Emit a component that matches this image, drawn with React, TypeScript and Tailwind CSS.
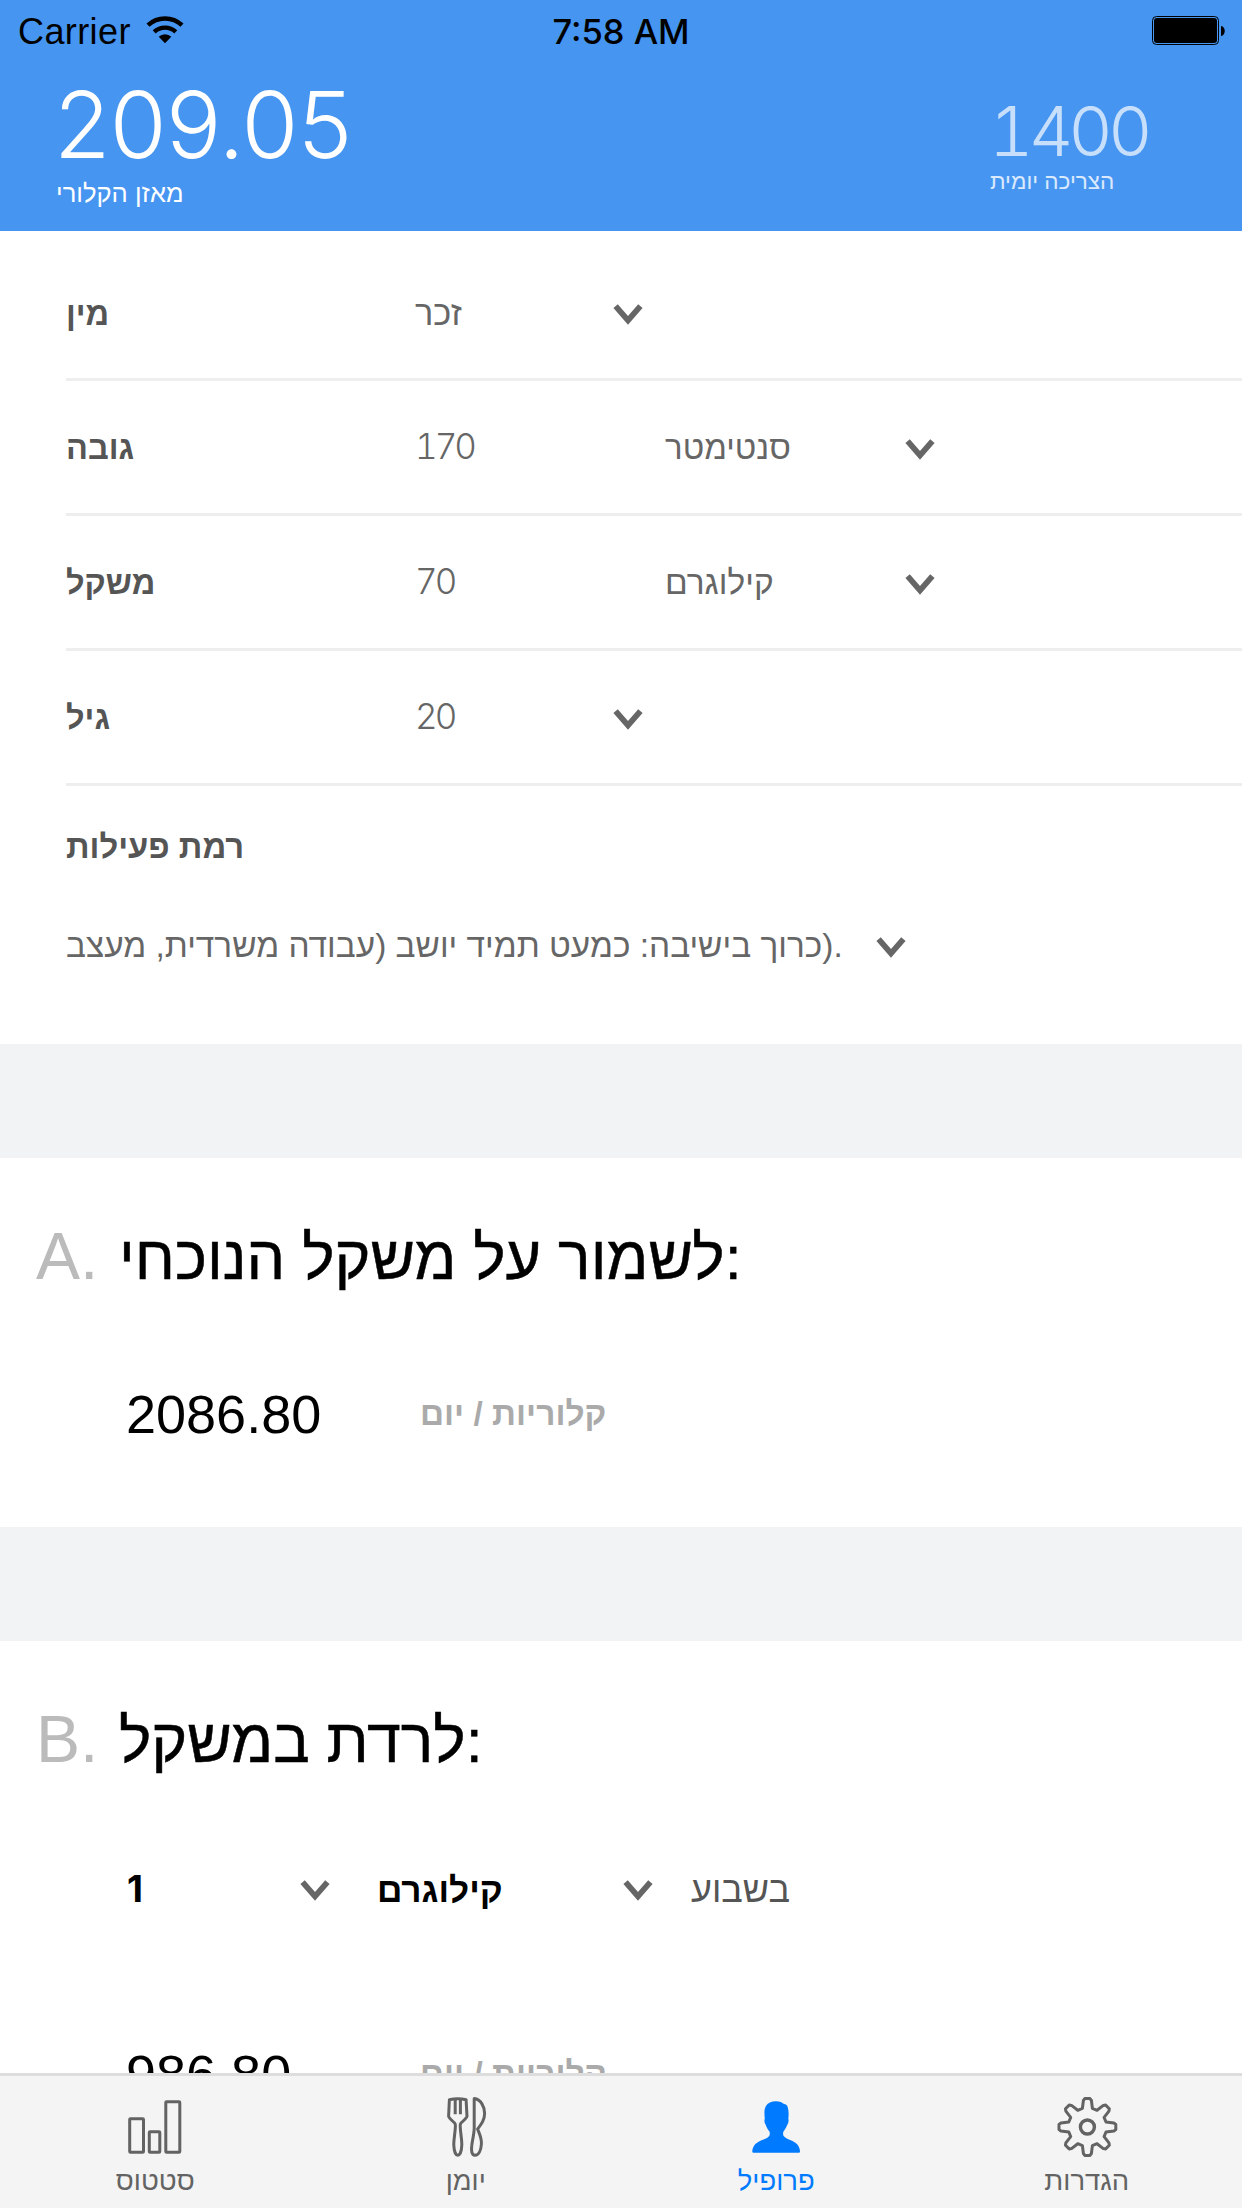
import React from 'react';

function Chevron({ className = '' }: { className?: string }) {
  return (
    <svg width="30" height="21" viewBox="0 0 30 21" className={'shrink-0 ' + className}>
      <path d="M2.6 2.2 L15 16.4 L27.4 2.2" fill="none" stroke="#666" strokeWidth="5.8" />
    </svg>
  );
}

function WifiIcon() {
  return (
    <svg width="38" height="28" viewBox="0 0 38 28">
      <g fill="none" stroke="#000" strokeWidth="4.4">
        <path d="M2 9.2 A24.8 24.8 0 0 1 36 9.2" />
        <path d="M8.2 15.9 A15.7 15.7 0 0 1 29.8 15.9" />
      </g>
      <path d="M12.7 20.7 A9 9 0 0 1 25.3 20.7 L19 27.2 Z" fill="#000" />
    </svg>
  );
}

function BatteryIcon() {
  return (
    <svg width="74" height="29" viewBox="0 0 74 29">
      <rect x="0.5" y="0.5" width="66" height="28" rx="4" fill="none" stroke="#000" />
      <rect x="2" y="2" width="63" height="25" rx="3" fill="#000" />
      <path d="M69 10 C74 10.5 74 19.5 69 20 Z" fill="#000" />
    </svg>
  );
}

function ChartIcon() {
  return (
    <svg width="64" height="64" viewBox="0 0 64 64" fill="none" stroke="#636363" strokeWidth="3">
      <rect x="6.7" y="23.8" width="13.8" height="33.4" rx="0.8" />
      <rect x="26.3" y="36.8" width="10.5" height="20.4" rx="0.8" />
      <rect x="42.8" y="6.8" width="14" height="50.4" rx="0.8" />
    </svg>
  );
}

function CutleryIcon() {
  return (
    <svg width="64" height="64" viewBox="0 0 64 64" fill="none" stroke="#636363" strokeWidth="3" strokeLinejoin="round">
      <path d="M15.4 4.8 Q23.8 2.6 32.1 4.8 L33 21.3 Q33 22.6 27 28 Q26 29 26.2 31 C26.4 38 28 45 27.8 50 C27.6 56 26 60.2 23.8 60.2 C21.6 60.2 20 56 19.8 50 C19.6 45 21.2 38 21.4 31 Q21.6 29 20.6 28 Q14.6 22.6 14.6 21.3 Z" />
      <path d="M21.2 4 V19.2 M26.4 4 V19.2" />
      <path d="M40.2 3.6 C47 4.4 50.6 12 50.6 18.5 C50.6 25 47.4 29 43.6 34 C45.4 39 47.8 43 47.4 49 C47 55.5 44.6 60.2 41 60.2 C37.4 60.2 37.2 55 37.7 51 C38.3 45 40.2 39 40.2 33 Z" />
    </svg>
  );
}

function PersonIcon() {
  return (
    <svg width="64" height="64" viewBox="0 0 64 64" fill="#007aff">
      <path d="M32 6.3 C36 6.3 38 7.3 39.5 8.8 C42 9 43.6 10.5 43.9 13 C44.8 16 44.8 20 44.3 23.6 C45 26 44.3 28.5 43.2 30 C42 33 40.8 34.6 39.3 36.8 C39 38.6 39 39.6 39.6 41 C41.6 43.6 44.5 44.2 48 45.8 C53 48.2 55.8 51.5 56 56.4 Q56 57.7 54.8 57.7 H9.6 Q8.3 57.7 8.3 56.4 C8.6 51.5 11.4 48.2 16.4 45.8 C20 44.2 23 43.6 25.2 41 C25.9 39.6 25.9 38.6 25.6 36.8 C24 34.6 22.8 33 21.8 30 C20.6 28.5 20 26 20.8 23.6 C20.2 18 20.2 14 21.8 11.2 C23.6 8 27.4 6.3 32 6.3 Z" />
    </svg>
  );
}

const gearTooth: [number, number][] = [
  [-5, -18.6],
  [-4, -26.5],
  [-2.6, -28.4],
  [2.6, -28.4],
  [4, -26.5],
  [5, -18.6],
];

const gearPoints = Array.from({ length: 8 }, (_, i) => {
  const a = (i * Math.PI) / 4;
  return gearTooth
    .map(([x, y]) => `${(32.4 + x * Math.cos(a) - y * Math.sin(a)).toFixed(2)},${(32 + x * Math.sin(a) + y * Math.cos(a)).toFixed(2)}`)
    .join(' ');
}).join(' ');

function GearIcon() {
  return (
    <svg width="64" height="64" viewBox="0 0 64 64" fill="none" stroke="#636363" strokeWidth="3" strokeLinejoin="round">
      <polygon points={gearPoints} />
      <circle cx="32.4" cy="32" r="7" strokeWidth="3.4" />
    </svg>
  );
}

const num = "font-['Inter'] font-[350] tabular-nums text-[35px] tracking-[-3px]";

function Row({ label, first, children }: { label: string; first?: boolean; children: React.ReactNode }) {
  return (
    <div
      className={
        'ml-[66px] flex items-baseline border-b-[3px] border-[#eee] leading-[40px] text-[#666] ' +
        (first ? 'h-[150px] pt-[62px]' : 'h-[135px] pt-[45px]')
      }
    >
      <div className="w-[349px] text-[32.5px] font-bold text-[#555]">{label}</div>
      {children}
    </div>
  );
}

function SectionTitle({ letter, text }: { letter: string; text: string }) {
  return (
    <div className="flex h-[226px] items-baseline pl-[36px] pt-[58px] leading-[80px]">
      <div className="w-[83px] text-[66px] text-[#bbb]">{letter}</div>
      <div className="text-[61px] text-black [-webkit-text-stroke:0.5px_black]">{text}</div>
    </div>
  );
}

function Calories({ value }: { value: string }) {
  return (
    <div className="flex items-start pl-[126px] leading-[60px]">
      <div className="w-[294px] text-[54px] leading-[61px] text-black">{value}</div>
      <div className="text-[33.4px] font-bold text-[#aaa]">קלוריות / יום</div>
    </div>
  );
}

function Tab({ icon, label, active }: { icon: React.ReactNode; label: string; active?: boolean }) {
  return (
    <div className={'flex flex-1 flex-col items-center pt-[19px] ' + (active ? 'text-[#007aff]' : 'text-[#636363]')}>
      {icon}
      <div className="mt-[7px] text-[27.4px] leading-[30px]">{label}</div>
    </div>
  );
}

export default function App() {
  return (
    <div className="flex h-[2208px] w-[1242px] flex-col overflow-hidden whitespace-nowrap bg-white font-['Liberation_Sans',sans-serif]">
      <header className="h-[231px] shrink-0 bg-[#4595f1]">
        <div className="grid h-[63px] grid-cols-3 leading-[63px] text-black">
          <div className="flex pl-[18px]">
            <span className="text-[36px] tracking-[0.4px]">Carrier</span>
            <div className="ml-[15px] pt-[16px]">
              <WifiIcon />
            </div>
          </div>
          <div className="text-center font-['Inter'] text-[34.5px] font-medium">7:58 AM</div>
          <div className="flex justify-end pr-[16px] pt-[16px]">
            <BatteryIcon />
          </div>
        </div>
        <div className="flex justify-between pl-[54px] text-white">
          <div className="pt-[12px]">
            <div className="font-['Inter'] text-[92px] font-light leading-[100px] tracking-[-0.6px]">209.05</div>
            <div className="ml-[2px] mt-[3px] text-[25.6px] leading-[30px]">מאזן הקלורי</div>
          </div>
          <div className="w-[252px] pt-[33px]">
            <div className="-ml-px font-['Inter'] text-[69px] font-light leading-[70px] tracking-[-5px] tabular-nums text-white/70">
              1400
            </div>
            <div className="mt-px text-[22.5px] leading-[30px] text-white/80">הצריכה יומית</div>
          </div>
        </div>
      </header>

      <main className="min-h-0 flex-1 overflow-hidden">
        <section className="h-[813px]">
          <Row label="מין" first>
            <div className="w-[198px] text-[34.4px]">זכר</div>
            <Chevron />
          </Row>
          <Row label="גובה">
            <div className={num + ' w-[250px]'}>170</div>
            <div className="w-[240px] text-[33px]">סנטימטר</div>
            <Chevron className="translate-y-px" />
          </Row>
          <Row label="משקל">
            <div className={num + ' w-[250px]'}>70</div>
            <div className="w-[240px] text-[33.5px]">קילוגרם</div>
            <Chevron className="translate-y-px" />
          </Row>
          <Row label="גיל">
            <div className={num + ' w-[198px]'}>20</div>
            <Chevron className="translate-y-px" />
          </Row>
          <div className="ml-[66px] flex flex-col pt-[41px] leading-[40px]">
            <div className="text-[32.8px] font-bold text-[#555]">רמת פעילות</div>
            <div className="mt-[59px] flex items-baseline text-[#666]">
              <div className="w-[810px] text-[33.4px]">
                <bdi>כרוך בישיבה: כמעט תמיד יושב (עבודה משרדית, מעצב</bdi>).
              </div>
              <Chevron className="translate-y-px" />
            </div>
          </div>
        </section>

        <div className="h-[114px] bg-[#f2f3f5]" />

        <section className="h-[369px]">
          <SectionTitle letter="A." text="לשמור על משקל הנוכחי:" />
          <Calories value="2086.80" />
        </section>

        <div className="h-[114px] bg-[#f2f3f5]" />

        <section>
          <SectionTitle letter="B." text="לרדת במשקל:" />
          <div className="flex h-[177px] items-baseline pl-[127px] pt-[2px] leading-[40px]">
            <div className="w-[173px] font-['Inter'] text-[37px] font-bold text-black">1</div>
            <Chevron className="-translate-y-px" />
            <div className="ml-[47px] w-[246px] text-[35.2px] font-bold text-black">קילוגרם</div>
            <Chevron className="-translate-y-px" />
            <div className="ml-[38px] text-[36px] text-[#555]">בשבוע</div>
          </div>
          <Calories value="986.80" />
        </section>
      </main>

      <nav className="flex h-[135px] shrink-0 border-t-[3px] border-[#ddd] bg-[#f4f4f4]">
        <Tab icon={<ChartIcon />} label="סטטוס" />
        <Tab icon={<CutleryIcon />} label="יומן" />
        <Tab icon={<PersonIcon />} label="פרופיל" active />
        <Tab icon={<GearIcon />} label="הגדרות" />
      </nav>
    </div>
  );
}
